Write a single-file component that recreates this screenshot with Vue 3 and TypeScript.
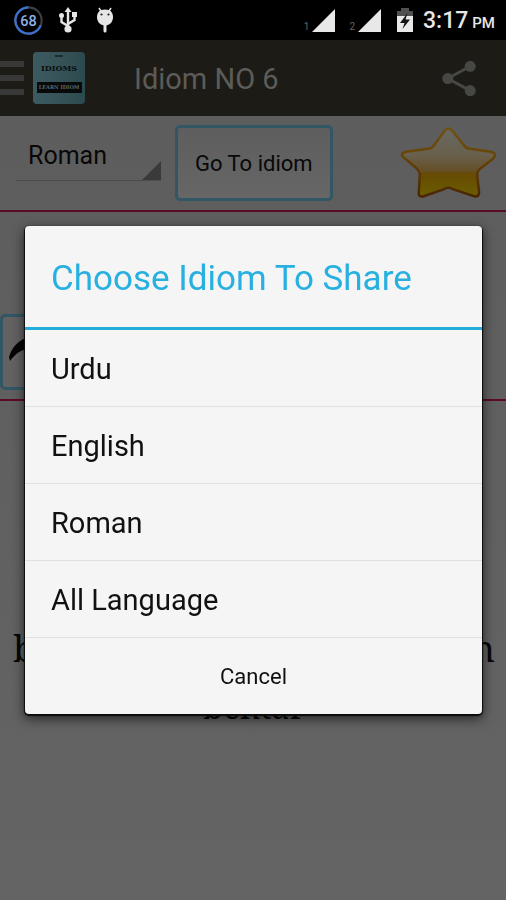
<script setup lang="ts">
import { ref } from 'vue'

const languages: string[] = ['Roman', 'Urdu', 'English']
const shareOptions: string[] = ['Urdu', 'English', 'Roman', 'All Language']
const language = ref<string>('Roman')
const dialogOpen = ref<boolean>(true)
</script>

<template>
  <div class="screen">
    <div class="status">
      <div class="status-group">
        <svg class="s-ring" viewBox="0 0 28 28" aria-hidden="true">
          <circle cx="14" cy="14" r="12.7" fill="none" stroke="#3d4043" stroke-width="2" />
          <path d="M14 1.3A12.7 12.7 0 1 0 25.8 18.7" fill="none" stroke="#3c71cc" stroke-width="2.2" />
          <text x="14" y="19" text-anchor="middle" class="ring-text">68</text>
        </svg>
        <svg class="s-usb" viewBox="0 0 18 26" aria-hidden="true">
          <g fill="none" stroke="#e6e6e6" stroke-width="2.400">
            <path d="M9 3V22M9 19L2.500 15V8.500M9 17L15.500 13V8" />
          </g>
          <path d="M9 0l3.500 5h-7z" fill="#e6e6e6" />
          <circle cx="9" cy="22" r="3.600" fill="#e6e6e6" />
          <circle cx="2.500" cy="8.500" r="2.500" fill="#e6e6e6" />
          <rect x="13" y="5" width="5" height="5" fill="#e6e6e6" />
        </svg>
        <svg class="s-droid" viewBox="0 0 18 26" aria-hidden="true">
          <path d="M3 1l2.500 4M15 1l-2.500 4" stroke="#e6e6e6" stroke-width="1.500" />
          <path d="M9 2.500c5.500 0 8 3 8 7.500s-3 8.500-8 8.500-8-4-8-8.500 2.500-7.500 8-7.500z" fill="#e6e6e6" />
          <path d="M9 17v7" stroke="#e6e6e6" stroke-width="3" stroke-linecap="round" />
          <circle cx="5.500" cy="7.500" r="1.100" fill="#222" />
          <circle cx="12.500" cy="7.500" r="1.100" fill="#222" />
        </svg>
      </div>
      <div class="status-group right">
        <span class="sim">1</span>
        <svg class="s-signal" viewBox="0 0 23 23" aria-hidden="true"><path d="M23 0v23H0z" fill="#e8e8e8" /></svg>
        <span class="sim second">2</span>
        <svg class="s-signal" viewBox="0 0 23 23" aria-hidden="true"><path d="M23 0v23H0z" fill="#e8e8e8" /></svg>
        <svg class="s-battery" viewBox="0 0 16 24" aria-hidden="true">
          <path d="M4 0h8v3h4v5H0V3h4z" fill="#505050" />
          <path d="M0 8h16v16H0z" fill="#e8e8e8" />
          <path d="M10.500 5L3 15h4.500L5.500 21 13 11.500H8.500z" fill="#111" />
        </svg>
        <span class="clock">3:17<small>PM</small></span>
      </div>
    </div>

    <header class="bar">
      <button class="menu" type="button" aria-label="Menu"><i></i><i></i><i></i></button>
      <div class="logo">
        <span class="logo-tick"></span>
        <span class="logo-name">IDIOMS</span>
        <span class="logo-band">LEARN IDIOM</span>
      </div>
      <h1>Idiom NO 6</h1>
      <button class="share" type="button" aria-label="Share" @click="dialogOpen = true">
        <svg viewBox="0 0 36 38" aria-hidden="true">
          <path d="M29 6.500L6 19l23 12.500" fill="none" stroke="#474744" stroke-width="3" />
          <g fill="#474744">
            <circle cx="29" cy="6.500" r="5.700" />
            <circle cx="6" cy="19" r="5.700" />
            <circle cx="29" cy="31.500" r="5.700" />
          </g>
        </svg>
      </button>
    </header>

    <main>
      <section class="tools">
        <div class="spinner">
          <select v-model="language" aria-label="Language">
            <option v-for="l in languages" :key="l">{{ l }}</option>
          </select>
          <svg class="corner" viewBox="0 0 19 19" aria-hidden="true"><path d="M19 0v19H0z" fill="#3a3a3a" /></svg>
        </div>
        <button class="goto" type="button">Go To idiom</button>
        <button class="star" type="button" aria-label="Favourite">
          <svg viewBox="0 0 98 72" aria-hidden="true">
            <defs>
              <linearGradient id="starFill" x1="0" y1="0" x2="0" y2="1">
                <stop offset="0" stop-color="#686763" />
                <stop offset="0.400" stop-color="#69604c" />
                <stop offset="0.630" stop-color="#654f25" />
                <stop offset="0.660" stop-color="#664a04" />
                <stop offset="1" stop-color="#6b5d00" />
              </linearGradient>
              <linearGradient id="starEdge" x1="0" y1="0" x2="0" y2="1">
                <stop offset="0" stop-color="#6e5012" />
                <stop offset="0.400" stop-color="#674406" />
                <stop offset="1" stop-color="#4a2504" />
              </linearGradient>
            </defs>
            <path
              d="M45 4Q49 -1 53 4L65 19Q67 22 71 22L92 25Q99 27 94 32L80 43Q78 45 78 49L80 66Q80 71 75 70L54 63Q49 60 44 63L24 70Q18 71 19 66L20 48Q20 45 17 42L4 31Q-1 27 6 25L28 22Q32 22 34 19Z"
              fill="url(#starFill)" stroke="url(#starEdge)" stroke-width="2.500" stroke-linejoin="round"
            />
          </svg>
        </button>
      </section>

      <section class="nav">
        <button class="prev" type="button" aria-label="Previous idiom">
          <svg viewBox="0 0 60 40" aria-hidden="true">
            <path d="M0 25C4 12 13 4 30 4V-2l22 15-22 15v-8C15 14 8 20 1 29z" fill="#050505" />
          </svg>
        </button>
      </section>

      <section class="idiom">
        <p class="edges"><span>b</span><span>n</span></p>
        <p class="last">behtar</p>
      </section>
    </main>

    <div v-if="dialogOpen" class="scrim">
      <div class="dialog" role="dialog" aria-modal="true" aria-labelledby="dialog-title">
        <h2 id="dialog-title">Choose Idiom To Share</h2>
        <ul>
          <li v-for="o in shareOptions" :key="o">
            <button type="button" @click="dialogOpen = false">{{ o }}</button>
          </li>
        </ul>
        <button class="cancel" type="button" @click="dialogOpen = false">Cancel</button>
      </div>
    </div>
  </div>
</template>

<style>
body {
  margin: 0;
  background: #626262;
}
</style>

<style scoped>
.screen {
  min-height: 100vh;
  display: flex;
  flex-direction: column;
  background: linear-gradient(#5c5c5c, #646464);
  font-family: Roboto, "Liberation Sans", sans-serif;
  color: #080808;
}
button {
  font: inherit;
  color: inherit;
  border: 0;
  padding: 0;
  margin: 0;
  background: none;
}
svg {
  display: block;
}
h1, h2, p, ul {
  margin: 0;
  padding: 0;
  font-weight: 400;
}
.status {
  height: 40px;
  box-sizing: border-box;
  padding: 0 11px 0 14px;
  display: flex;
  justify-content: space-between;
  align-items: center;
  background: #000;
}
.status-group {
  display: flex;
  align-items: center;
}
.status-group.right {
  align-items: flex-end;
}
.s-ring {
  width: 29px;
  height: 29px;
}
.ring-text {
  font-size: 14px;
  font-weight: 500;
  fill: #8fb0e8;
}
.s-usb {
  width: 18px;
  height: 26px;
  margin-left: 16px;
}
.s-droid {
  width: 18px;
  height: 26px;
  margin-left: 19px;
}
.sim {
  font-size: 10px;
  line-height: 10px;
  color: #666;
  margin-right: 3px;
}
.sim.second {
  margin-left: 14px;
}
.s-signal {
  width: 23px;
  height: 23px;
}
.s-battery {
  width: 16px;
  height: 24px;
  margin: 0 10px 0 16px;
}
.clock {
  font-size: 23px;
  line-height: 18px;
  font-weight: 500;
  color: #e6e6e6;
}
.clock small {
  font-size: 15px;
  margin-left: 4px;
}
.bar {
  height: 76px;
  display: flex;
  align-items: center;
  padding-right: 29px;
  background: #1c1b16;
}
.menu {
  width: 24px;
  display: grid;
  gap: 8px;
}
.menu i {
  height: 6px;
  background: #383838;
}
.logo {
  width: 52px;
  height: 52px;
  margin-left: 9px;
  border-radius: 4px;
  display: flex;
  flex-direction: column;
  align-items: center;
  overflow: hidden;
  background: linear-gradient(90deg, #3c5b61, #355156 60%, #2b4a4f);
  color: #090d0e;
  font-family: "DejaVu Serif", serif;
  font-weight: 700;
}
.logo-tick {
  width: 8px;
  height: 2px;
  margin-top: 3px;
  background: #1c2c2f;
}
.logo-name {
  margin-top: 4px;
  font-size: 8px;
  line-height: 14px;
}
.logo-band {
  width: 45px;
  margin-top: 7px;
  background: #080a0a;
  color: #56696c;
  font-size: 5px;
  line-height: 11px;
  text-align: center;
}
.bar h1 {
  flex: 1;
  margin-left: 49px;
  padding-top: 2px;
  font-size: 29px;
  line-height: 36px;
  color: #5c5c59;
}
.share {
  width: 35px;
}
.tools {
  height: 94px;
  display: flex;
  align-items: center;
  padding: 0 9px 0 16px;
  border-bottom: 2px solid #5a0c26;
}
.spinner {
  display: grid;
  width: 145px;
  margin-bottom: 8px;
  border-bottom: 1px solid #4c4c4c;
}
.spinner select,
.spinner .corner {
  grid-area: 1 / 1;
}
.spinner select {
  appearance: none;
  box-sizing: content-box;
  width: 109px;
  height: 36px;
  margin: 0;
  padding: 0 24px 7px 12px;
  border: 0;
  background: none;
  font: inherit;
  font-size: 25px;
  color: #080808;
}
.spinner .corner {
  width: 19px;
  height: 19px;
  place-self: end;
  pointer-events: none;
}
.goto {
  box-sizing: border-box;
  height: 76px;
  margin-left: 14px;
  padding: 0 17px;
  border: 3px solid #315764;
  border-radius: 5px;
  background: linear-gradient(#5e5e5e, #666);
  font-size: 22px;
}
.star {
  width: 97px;
  margin-left: auto;
}
.nav {
  display: flex;
  align-items: flex-end;
  height: 187px;
  border-bottom: 2px solid #5a0c26;
}
.prev {
  box-sizing: border-box;
  width: 90px;
  height: 76px;
  margin-bottom: 9px;
  padding-left: 6px;
  border: 3px solid #315764;
  border-radius: 5px;
  background: #626262;
}
.prev svg {
  width: 60px;
  height: 40px;
}
.idiom {
  padding: 219px 11px 0 13px;
  font-family: "Noto Serif", "Liberation Serif", serif;
  font-size: 36px;
  line-height: 58px;
  text-align: center;
}
.idiom .last {
  font-size: 32px;
}
.edges {
  display: flex;
  justify-content: space-between;
}
.scrim {
  position: fixed;
  inset: 40px 0 0;
  display: flex;
  align-items: center;
  padding: 0 24px 0 25px;
}
.dialog {
  flex: 1;
  overflow: hidden;
  border-radius: 4px;
  background: #f5f5f5;
  color: #111;
  box-shadow: 0 1px 1px 1px #0c0c0c, 0 4px 12px 1px rgba(0, 0, 0, 0.6);
}
.dialog h2 {
  padding: 5px 26px 0;
  border-bottom: 3px solid #24acdc;
  font-size: 35px;
  line-height: 96px;
  color: #28b0e0;
}
.dialog ul {
  list-style: none;
}
.dialog li {
  border-bottom: 1px solid #e0e0e0;
}
.dialog li button {
  display: block;
  width: 100%;
  padding: 2px 26px 0;
  font-size: 29px;
  line-height: 74px;
  text-align: left;
}
.cancel {
  display: block;
  width: 100%;
  padding-top: 2px;
  font-size: 22px;
  line-height: 74px;
}
</style>
